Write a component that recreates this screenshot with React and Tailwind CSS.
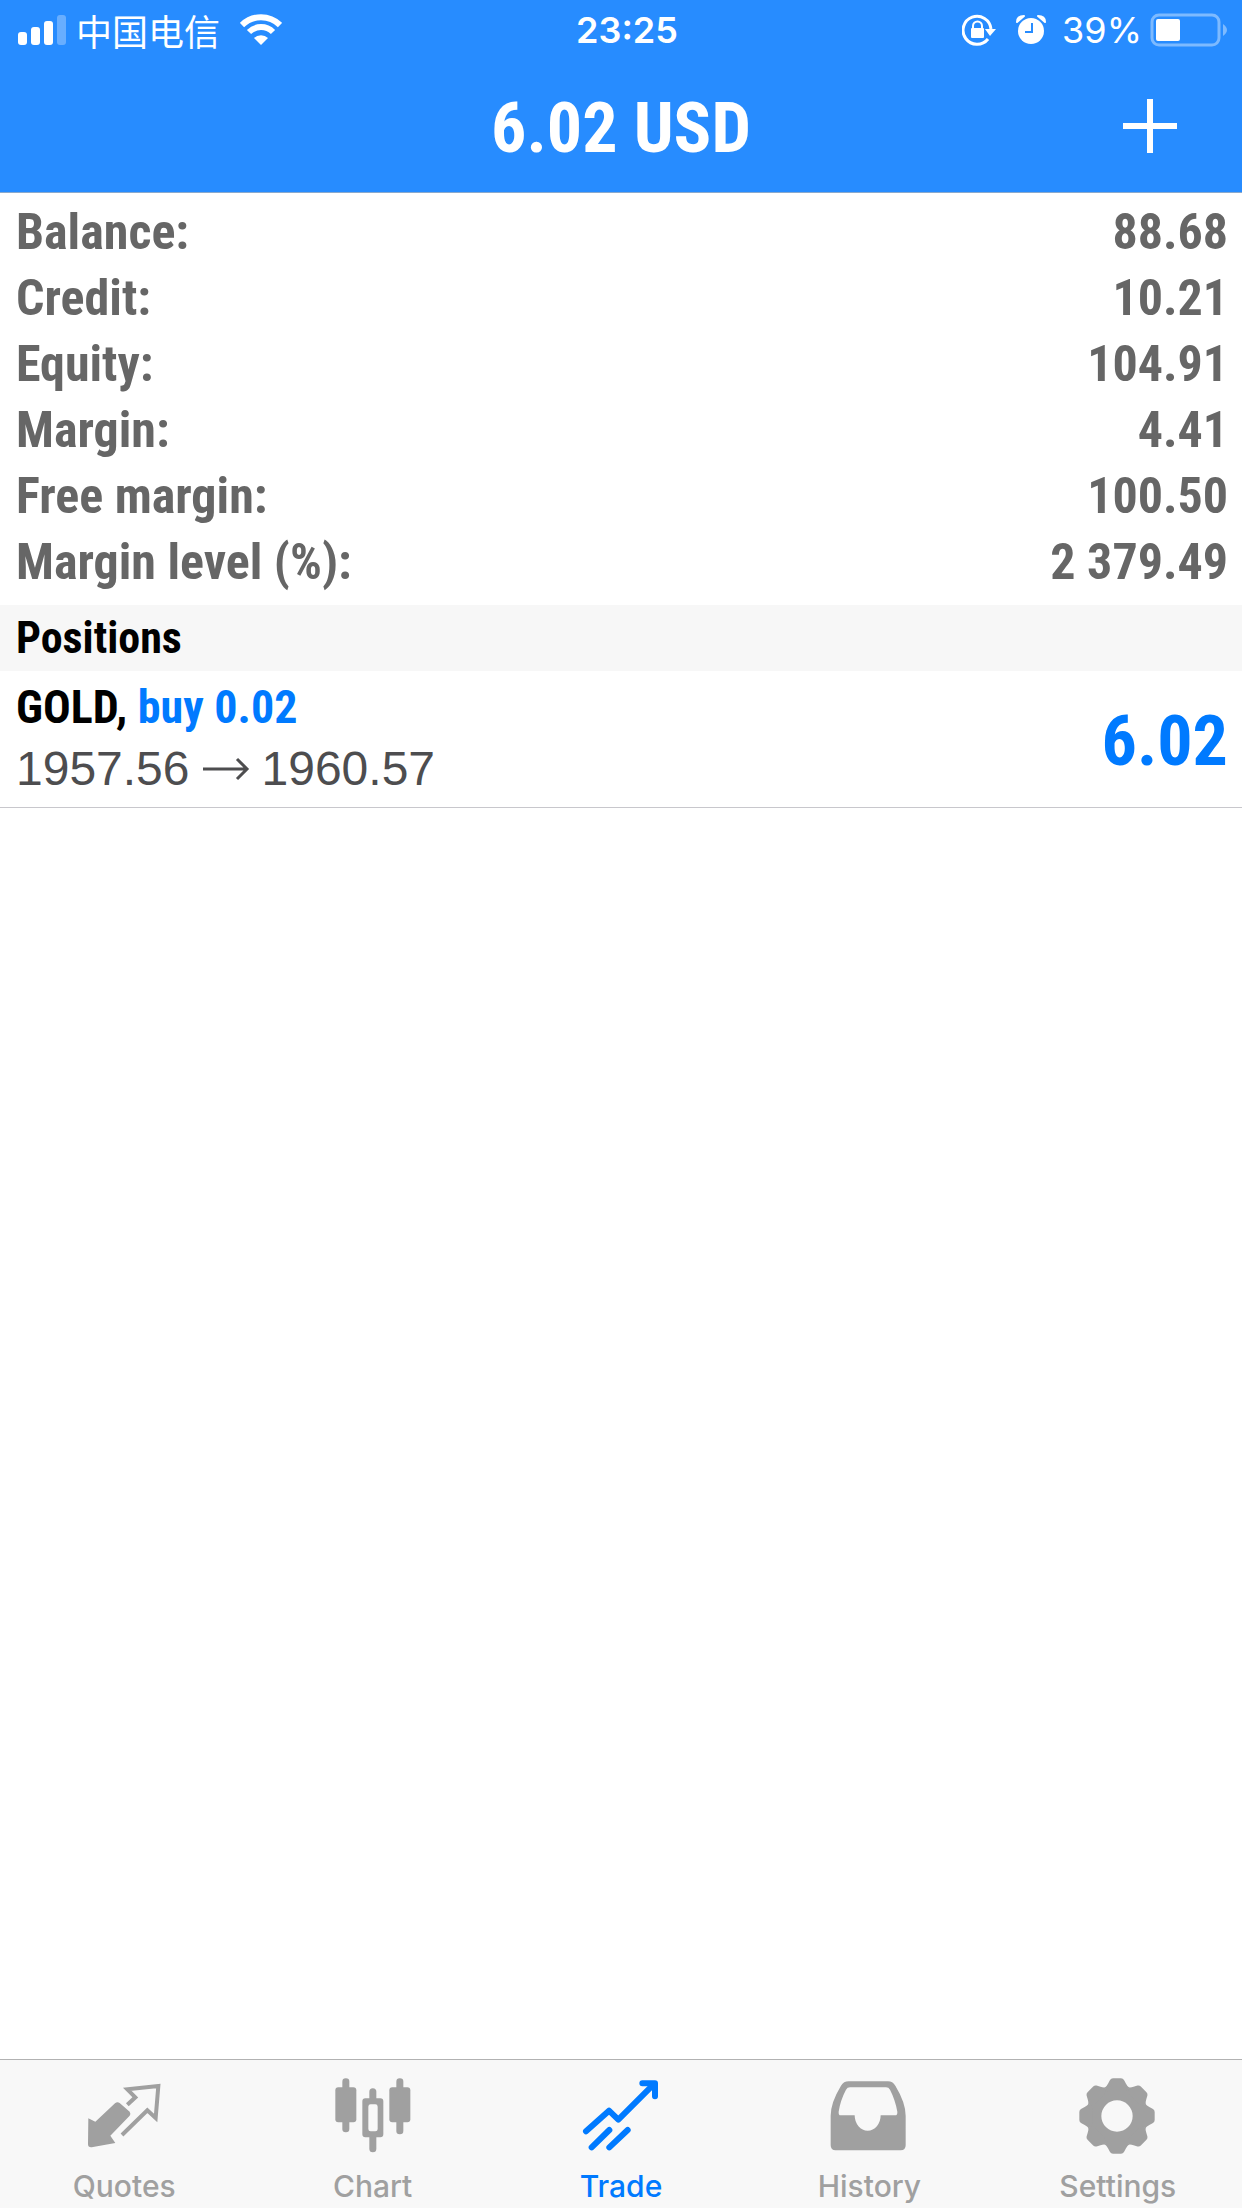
import { useState } from "react"

const condensed = "font-['Liberation_Sans_Narrow','Roboto_Condensed',sans-serif] font-bold"

const account = [
  { label: "Balance:", value: "88.68" },
  { label: "Credit:", value: "10.21" },
  { label: "Equity:", value: "104.91" },
  { label: "Margin:", value: "4.41" },
  { label: "Free margin:", value: "100.50" },
  { label: "Margin level (%):", value: "2 379.49" }
]

const positions = [{ id: 1, symbol: "GOLD", side: "buy", volume: "0.02", open: "1957.56", current: "1960.57", profit: "6.02" }]

const QuotesIcon = () => (
  <svg viewBox="72 83 240 240" className="size-20" fill="none" aria-hidden="true">
    <path
      d="M85 210 L106 220 L165 165 Q172 159 179 164 L209 190 Q213 196 209 202 L151 262 L166 284 L95 297 Q84 298 84 288 Z"
      fill="currentColor"
    />
    <path d="M202 169 L226 147 L202 123 L295 113 L287 209 L262 186 L186 260" stroke="currentColor" strokeWidth="12" strokeLinejoin="miter" />
  </svg>
)

const ChartIcon = () => (
  <svg viewBox="68 83 240 240" className="size-20" fill="currentColor" aria-hidden="true">
    <rect x="96" y="90" width="21" height="162" rx="10" />
    <rect x="75" y="117" width="63" height="105" rx="9" />
    <rect x="258" y="90" width="21" height="168" rx="10" />
    <rect x="237" y="117" width="63" height="105" rx="9" />
    <path d="M177 155 V130 a10 10 0 0 1 21 0 V155 Z" />
    <path d="M177 262 V301 a10 10 0 0 0 21 0 V262 Z" />
    <path
      fillRule="evenodd"
      d="M165 150h45a9 9 0 0 1 9 9v99a9 9 0 0 1-9 9h-45a9 9 0 0 1-9-9v-99a9 9 0 0 1 9-9zm16 18a7 7 0 0 0-7 7v67a7 7 0 0 0 7 7h14a7 7 0 0 0 7-7v-67a7 7 0 0 0-7-7z"
    />
  </svg>
)

const TradeIcon = () => (
  <svg
    viewBox="63 83 240 240"
    className="size-20"
    fill="none"
    stroke="currentColor"
    strokeWidth="18"
    strokeLinecap="round"
    strokeLinejoin="round"
    aria-hidden="true"
  >
    <path d="M78 249 L147 187 L175 214 L280 109" />
    <path d="M247 105 H285 V144" />
    <path d="M95 297 L148 245 M148 297 L203 245" />
  </svg>
)

const HistoryIcon = () => (
  <svg viewBox="85 83 240 240" className="size-20" fill="currentColor" aria-hidden="true">
    <path
      fillRule="evenodd"
      d="M144 99 H262 Q276 99 284 112 Q315 163 315 202 V291 Q315 306 300 306 H105 Q90 306 90 291 V202 Q90 163 121 112 Q129 99 144 99 Z M148 117 Q140 117 136 124 Q119 156 114 190 Q113 201 120 201 H162 A39 46 0 0 0 240 201 H283 Q291 201 290 190 Q284 155 268 124 Q264 117 256 117 Z"
    />
  </svg>
)

const SettingsIcon = () => (
  <svg viewBox="113 83 240 240" className="size-20" fill="currentColor" aria-hidden="true">
    <circle cx="230" cy="203" r="68" fill="none" stroke="currentColor" strokeWidth="42" />
    {[0, 45, 90, 135, 180, 225, 270, 315].map((angle) => (
      <path key={angle} transform={`rotate(${angle} 230 203)`} d="M193 118 Q199 114 203 106 L209 95 Q212 90 218 90 H242 Q248 90 251 95 L257 106 Q261 114 267 118 L256 130 H204 Z" />
    ))}
  </svg>
)

const tabs = [
  { name: "Quotes", Icon: QuotesIcon },
  { name: "Chart", Icon: ChartIcon },
  { name: "Trade", Icon: TradeIcon },
  { name: "History", Icon: HistoryIcon },
  { name: "Settings", Icon: SettingsIcon }
]

const StatusBar = () => (
  <div className="grid grid-cols-[1fr_auto_1fr] items-center h-15 pl-4 pr-3 text-white text-4xl font-['Inter',sans-serif]">
    <div className="flex items-center">
      <svg viewBox="0 0 50 32" className="w-12.5 h-8" fill="currentColor" aria-hidden="true">
        <rect x="2" y="18" width="9" height="13" rx="3" />
        <rect x="15" y="13" width="9" height="18" rx="3" />
        <rect x="28" y="7" width="9" height="24" rx="3" />
        <rect x="41" y="1" width="9" height="30" rx="3" opacity="0.3" />
      </svg>
      <span className="ml-2.5 font-['Noto_Sans_CJK_SC',sans-serif]">中国电信</span>
      <svg viewBox="0 0 42 32" className="ml-5 w-10.5 h-8" aria-hidden="true">
        <g fill="none" stroke="currentColor" strokeWidth="6">
          <path d="M2 11 A27 27 0 0 1 40 11" />
          <path d="M9 18 A17 17 0 0 1 33 18" />
        </g>
        <path d="M21 31 L14 24 A10 10 0 0 1 28 24 Z" fill="currentColor" />
      </svg>
    </div>
    <span className="pl-2 font-semibold">23:25</span>
    <div className="flex items-center justify-end">
      {/* Rotation lock */}
      <svg viewBox="0 0 34 32" className="w-8.5 h-8" fill="none" stroke="currentColor" aria-hidden="true">
        <path d="M26 25 A14 14 0 1 1 29 15" strokeWidth="3" />
        <path d="M23 15 H34 L28 22 Z" fill="currentColor" stroke="none" />
        <rect x="9" y="14" width="13" height="10" rx="1" fill="currentColor" stroke="none" />
        <path d="M11 15 V12 A4 4 0 0 1 20 12 V15" strokeWidth="2" />
      </svg>
      {/* Alarm */}
      <svg viewBox="0 0 30 32" className="ml-5 w-7.5 h-8" fill="currentColor" aria-hidden="true">
        <circle cx="15" cy="17" r="13" />
        <path d="M1 8 Q1 2 8 2 Z M29 8 Q29 2 22 2 Z" stroke="currentColor" strokeWidth="2" strokeLinejoin="round" />
        <path d="M16 9 V18 H9" fill="none" stroke="#278cff" strokeWidth="2" />
      </svg>
      <span className="ml-4">39%</span>
      <svg viewBox="0 0 80 34" className="ml-2 w-20 h-8.5" aria-hidden="true">
        <rect x="2" y="2" width="67" height="30" rx="7" fill="none" stroke="#fff" strokeWidth="3" opacity="0.4" />
        <rect x="6" y="6" width="24" height="22" rx="2" fill="#fff" />
        <path d="M73 11 Q81 17 73 23 Z" fill="#fff" opacity="0.4" />
      </svg>
    </div>
  </div>
)

const App = () => {
  const [activeTab, setActiveTab] = useState("Trade")

  return (
    <div className="flex flex-col min-h-screen bg-white">
      <header className="bg-[#278cff] border-b border-[#8aa9cc]">
        <StatusBar />
        <div className="grid grid-cols-[1fr_auto_1fr] items-center h-33 text-white">
          <h1 className={`col-start-2 pt-1 text-[70px] ${condensed}`}>6.02 USD</h1>
          <button aria-label="New order" className="justify-self-end mr-16">
            <svg viewBox="0 0 56 56" className="size-14" stroke="currentColor" strokeWidth="6" aria-hidden="true">
              <path d="M28 1 V55 M1 28 H55" />
            </svg>
          </button>
        </div>
      </header>

      <main className="flex-1">
        <dl className={`pl-4 pr-3.5 pt-1.5 pb-2.5 text-[#666] text-[50px] leading-[66px] ${condensed}`}>
          {account.map((row) => (
            <div key={row.label} className="flex justify-between">
              <dt>{row.label}</dt>
              <dd>{row.value}</dd>
            </div>
          ))}
        </dl>

        <h2 className={`pl-4 pr-3.5 bg-[#f7f7f7] text-black text-[44px] leading-[66px] ${condensed}`}>Positions</h2>

        <ul>
          {positions.map((p) => (
            <li key={p.id} className="flex items-center justify-between pl-4 pr-3.5 pt-1 pb-2 border-b border-[#c8c7cc]">
              <div>
                <p className={`text-[46px] leading-16 text-black ${condensed}`}>
                  {p.symbol}, <span className="text-[#007aff]">{`${p.side} ${p.volume}`}</span>
                </p>
                <p className="flex items-center text-5xl leading-15 text-[#4d4d4f] font-['Liberation_Sans',sans-serif]">
                  {p.open}
                  <svg viewBox="0 0 48 24" className="mx-3 w-12 h-6" fill="none" stroke="currentColor" strokeWidth="3" aria-hidden="true">
                    <path d="M1 12 H45 M35 2 L45 12 L35 22" />
                  </svg>
                  {p.current}
                </p>
              </div>
              <span className={`pt-2 text-[70px] text-[#007aff] ${condensed}`}>{p.profit}</span>
            </li>
          ))}
        </ul>
      </main>

      <nav className="grid grid-cols-5 bg-[#f8f8f8] border-t border-[#b2b2b2]">
        {tabs.map(({ name, Icon }) => (
          <button
            key={name}
            onClick={() => setActiveTab(name)}
            className={`flex flex-col items-center pt-4 pb-1 ${activeTab === name ? "text-[#007aff]" : "text-[#a0a0a0]"}`}
          >
            <Icon />
            <span className="mt-3 text-[30px] leading-9 font-medium text-center font-['Inter',sans-serif]">{name}</span>
          </button>
        ))}
      </nav>
    </div>
  )
}

export default App
